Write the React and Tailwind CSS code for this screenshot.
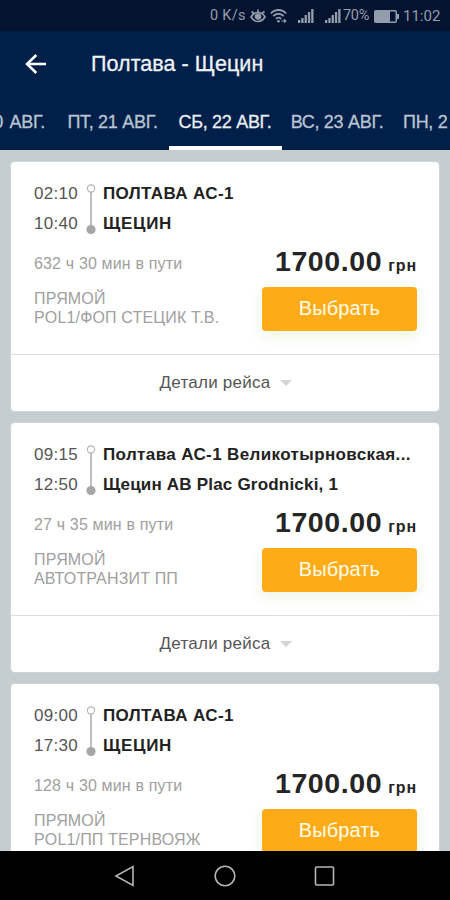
const trips = [
  {
    departure: "02:10",
    arrival: "10:40",
    from: "ПОЛТАВА АС-1",
    to: "ЩЕЦИН",
    toClass: "tracking-[0.7px]",
    duration: "632 ч 30 мин в пути",
    carrier: "POL1/ФОП СТЕЦИК Т.В.",
  },
  {
    departure: "09:15",
    arrival: "12:50",
    from: "Полтава АС-1 Великотырновская...",
    to: "Щецин АВ Plac Grodnicki, 1",
    toClass: "tracking-[0.2px]",
    duration: "27 ч 35 мин в пути",
    carrier: "АВТОТРАНЗИТ ПП",
  },
  {
    departure: "09:00",
    arrival: "17:30",
    from: "ПОЛТАВА АС-1",
    to: "ЩЕЦИН",
    toClass: "tracking-[0.7px]",
    duration: "128 ч 30 мин в пути",
    carrier: "POL1/ПП ТЕРНВОЯЖ",
  },
];

function Signal({ className }) {
  return (
    <svg viewBox="0 0 16 14" className={className} fill="currentColor">
      <path d="M0 11h2.300v3H0zM3.300 9h2.300v5H3.300zM6.600 6h2.300v8H6.600zM9.900 3h2.300v11H9.900zM13.200 0h2.300v14h-2.300z" />
    </svg>
  );
}

function StatusBar() {
  return (
    <div className="flex h-[31px] shrink-0 items-center bg-[#041430] pt-px pl-[210px] font-[Roboto,sans-serif] text-[14px] text-[#939cab]">
      <span className="w-[40px] text-[14.500px] tracking-[0.3px] whitespace-nowrap">0 K/s</span>
      <svg viewBox="0 0 16 14" className="h-[14px] w-4 shrink-0" fill="none" stroke="currentColor" strokeWidth="1.700">
        <path d="M1 8c2-3.500 4.500-4.500 7-4.500S13 4.500 15 8c-2 3-4.500 4.500-7 4.500S3 11 1 8zM1.500 2.500l2.500 2M14.500 2.500L12 4.500M8 .5v3" />
        <circle cx="8" cy="7.500" r="2.500" fill="currentColor" />
      </svg>
      <svg viewBox="0 0 17 14" className="ml-1 h-[14px] w-[17px] shrink-0" fill="none" stroke="currentColor" strokeWidth="1.800">
        <path d="M.8 4.500C5-.2 12-.2 16.200 4.500M3.300 7.200c3-3.300 7.400-3.300 10.400 0M5.800 9.800c1.600-1.700 3.800-1.700 5.400 0" />
        <circle cx="8.500" cy="12.300" r="1.300" fill="currentColor" stroke="none" />
        <path d="M11.500 12h4M14 10.300l1.800 1.700-1.800 1.700" strokeWidth="1.200" />
      </svg>
      <Signal className="ml-[11px] h-[14px] w-4 shrink-0" />
      <Signal className="ml-[11px] h-[14px] w-4 shrink-0" />
      <span className="ml-[2px] w-[31px] text-[14.500px] tracking-[-0.3px]">70%</span>
      <svg viewBox="0 0 26 13" className="h-[13px] w-[26px] shrink-0">
        <rect x=".75" y=".75" width="21.500" height="11.500" rx="1" fill="none" stroke="currentColor" strokeWidth="1.500" />
        <path d="M1 1h15v11H1zM23 4h2v5h-2z" fill="currentColor" />
      </svg>
      <span className="ml-[3px] text-[15px] whitespace-nowrap">11:02</span>
    </div>
  );
}

function Header() {
  return (
    <header className="h-[119px] shrink-0 bg-[#00204a]">
      <div className="flex h-[65px] items-center pl-[25px]">
        <svg viewBox="0 0 22 20" className="h-5 w-[22px]" fill="none" stroke="#fff" strokeWidth="2.500">
          <path d="M21 10H2M11.300 1L2 10l9.300 9" />
        </svg>
        <h1 className="ml-[44px] pt-px text-[21.500px] tracking-[0.05px] text-[#eef1f5] [-webkit-text-stroke:0.3px_currentColor]">
          Полтава - Щецин
        </h1>
      </div>
      <nav className="flex h-[54px] overflow-hidden text-[18px] tracking-[-0.3px] whitespace-nowrap text-[#b9c3d1] [-webkit-text-stroke:0.3px_currentColor]">
        <div className="flex w-[56px] shrink-0 justify-end pt-[13px] pr-[11px] [word-spacing:2px]">20 АВГ.</div>
        <div className="w-[113px] shrink-0 pt-[13px] text-center">ПТ, 21 АВГ.</div>
        <div className="w-[113px] shrink-0 border-b-4 border-white pt-[13px] pr-px text-center text-[#e9edf2]">СБ, 22 АВГ.</div>
        <div className="w-[110px] shrink-0 pt-[13px] text-center">ВС, 23 АВГ.</div>
        <div className="pt-[13px] pl-[11px]">ПН, 2</div>
      </nav>
    </header>
  );
}

function TripCard({ trip }) {
  return (
    <article className="h-[249px] shrink-0 rounded-[4px] bg-white shadow-[0_0_2px_rgba(255,255,255,0.6)]">
      <div className="h-[193px] border-b border-[#dcdfe0] pt-4 pr-[22px] pl-[23px]">
        <div className="flex h-[60px]">
          <div className="w-[51px] pt-px text-[17px] leading-[30px] tracking-[0.3px] text-[#555]">
            <div>{trip.departure}</div>
            <div>{trip.arrival}</div>
          </div>
          <svg viewBox="0 0 12 60" className="h-[60px] w-3 shrink-0">
            <path d="M6 14v36" stroke="#aaa" strokeWidth="1.500" />
            <circle cx="6" cy="10.500" r="3.600" fill="#fff" stroke="#b4b4b4" strokeWidth="1.200" />
            <circle cx="6" cy="51.500" r="4.600" fill="#a6a6a6" />
          </svg>
          <div className="ml-[6px] pt-px text-[17px] leading-[30px] font-bold whitespace-nowrap text-[#222]">
            <div className="tracking-[0.38px]">{trip.from}</div>
            <div className={trip.toClass}>{trip.to}</div>
          </div>
        </div>
        <div className="flex justify-between">
          <div className="text-[16px] tracking-[0.16px] whitespace-nowrap text-[#a0a0a0]">
            <div className="pt-[16px] leading-5">{trip.duration}</div>
            <div className="pt-[16px] leading-[18.500px]">
              ПРЯМОЙ
              <br />
              {trip.carrier}
            </div>
          </div>
          <div className="w-[155px]">
            <div className="flex h-[49px] items-baseline justify-end pt-[6px] font-bold whitespace-nowrap text-[#252525]">
              <span className="text-[28.500px] leading-[34px] tracking-[0.6px]">1700.00</span>
              <span className="ml-[6px] text-[16px] tracking-[0.9px]">грн</span>
            </div>
            <button className="h-[44px] w-full rounded-[4px] bg-[#fdac18] pb-[3px] text-[20px] tracking-[0.1px] text-[#fffbea] shadow-[0_6px_14px_rgba(150,200,90,0.16)]">
              Выбрать
            </button>
          </div>
        </div>
      </div>
      <div className="flex h-[56px] items-center justify-center pl-[2px] text-[17px] tracking-[0.25px] text-[#555]">
        <span>Детали рейса</span>
        <svg viewBox="0 0 12 6" className="ml-[10px] h-[6px] w-3">
          <path d="M0 0h12L6 6z" fill="#d4d4d4" />
        </svg>
      </div>
    </article>
  );
}

function NavigationBar() {
  return (
    <div className="flex h-[49px] shrink-0 items-center justify-center gap-[78px] bg-black">
      <svg viewBox="0 0 22 22" className="h-[22px] w-[22px]" fill="none" stroke="#b5b5b5" strokeWidth="1.600">
        <path d="M19 1.500v19L2 11z" />
      </svg>
      <svg viewBox="0 0 22 22" className="h-[22px] w-[22px]" fill="none" stroke="#b5b5b5" strokeWidth="1.600">
        <circle cx="11" cy="11" r="9.800" />
      </svg>
      <svg viewBox="0 0 22 22" className="h-[22px] w-[22px]" fill="none" stroke="#b5b5b5" strokeWidth="1.600">
        <rect x="1.500" y="2" width="18" height="18" rx="1" />
      </svg>
    </div>
  );
}

export default function App() {
  return (
    <div className="flex h-[900px] w-[450px] flex-col overflow-hidden bg-[#c5cdd0] font-['Liberation_Sans',Arial,sans-serif]">
      <StatusBar />
      <Header />
      <main className="flex min-h-0 flex-1 flex-col gap-3 overflow-hidden px-[11px] pt-3">
        {trips.map((trip) => (
          <TripCard key={trip.departure} trip={trip} />
        ))}
      </main>
      <NavigationBar />
    </div>
  );
}
